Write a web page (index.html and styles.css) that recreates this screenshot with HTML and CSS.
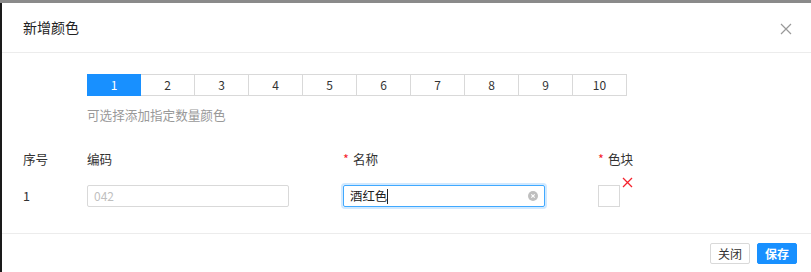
FILE: index.html
```html
<!DOCTYPE html>
<html>
  <head>
    <meta http-equiv="Content-Type" content="text/html; charset=utf-8">
    <link rel="stylesheet" href="styles.css">
  </head>
  <body>
    <div class="shade"></div>
    <div class="modal">
      <div class="head">
        <span class="title">新增颜色</span>
        <span class="close">
          <svg width="12" height="12" viewBox="0 0 12 12"><path d="M1 1L11 11M11 1L1 11" stroke="#999" stroke-width="1.2" fill="none"/></svg>
        </span>
      </div>
      <div class="body">
        <div class="pager">
          <span class="num on">1</span><span class="num">2</span><span class="num">3</span><span class="num">4</span><span class="num">5</span><span class="num">6</span><span class="num">7</span><span class="num">8</span><span class="num">9</span><span class="num">10</span>
        </div>
        <div class="hint">可选择添加指定数量颜色</div>
        <div class="grid">
          <div class="th">序号</div>
          <div class="th">编码</div>
          <div class="th"><i class="req">*</i>名称</div>
          <div class="th"><i class="req">*</i>色块</div>
          <div class="td">1</div>
          <div class="td"><div class="ipt"><span class="ph">042</span></div></div>
          <div class="td"><div class="ipt focus"><span class="val">酒红色</span><span class="caret"></span><span class="clear">
            <svg width="10" height="10" viewBox="0 0 10 10"><circle cx="5" cy="5" r="5" fill="#bfbfbf"/><path d="M3.3 3.3L6.7 6.7M6.7 3.3L3.3 6.7" stroke="#fff" stroke-width="1.1"/></svg>
          </span></div></div>
          <div class="td"><div class="swatch"><span class="del">
            <svg width="11" height="11" viewBox="0 0 11 11"><path d="M1 1L10 10M10 1L1 10" stroke="#f5222d" stroke-width="1.3" fill="none"/></svg>
          </span></div></div>
        </div>
      </div>
      <div class="foot">
        <button class="btn">关闭</button>
        <button class="btn primary">保存</button>
      </div>
    </div>
  </body>
</html>
```

FILE: styles.css
```css
html, body { margin: 0; padding: 0; width: 811px; height: 272px; overflow: hidden; }
body { background: #1a1a1a; font-family: "Noto Sans CJK SC", "Microsoft YaHei", sans-serif; font-size: 12px; color: #333; }
.shade { height: 3px; background: #8a8a8a; }
.modal { margin-left: 2px; background: #fff; height: 269px; }
.head { height: 49px; border-bottom: 1px solid #ececec; display: flex; align-items: center; justify-content: space-between; padding: 0 19px 0 21px; }
.title { font-size: 14px; color: #222; margin-top: -1px; }
.close { display: flex; margin-top: 2px; }
.body { padding: 21px 0 0 85px; height: 159px; border-bottom: 1px solid #ececec; }
.pager { display: flex; }
.num { width: 53px; height: 20px; line-height: 20px; text-align: center; border: 1px solid #d9d9d9; border-left: none; color: #333; }
.num:first-child { width: 52px; border-left: 1px solid #d9d9d9; }
.num.on { background: #1890ff; border-color: #1890ff; color: #fff; }
.hint { color: #999; font-size: 12.6px; margin-top: 10px; line-height: 18px; }
.grid { display: grid; grid-template-columns: 64px 256px 255px 60px; margin-left: -64px; margin-top: 26px; }
.th { line-height: 18px; font-size: 12.6px; color: #333; }
.req { font-style: normal; color: #f5222d; margin-right: 4px; }
.td { margin-top: 17px; height: 22px; line-height: 22px; font-size: 12.6px; }
.ipt { position: relative; height: 20px; border: 1px solid #d9d9d9; border-radius: 2px; display: flex; align-items: center; padding-left: 6px; box-sizing: content-box; width: 194px; }
.ipt.focus { border-color: #40a9ff; box-shadow: 0 0 0 2px rgba(24,144,255,0.2); }
.ph { color: #bfbfbf; font-size: 12px; }
.val { color: #222; font-size: 12.4px; }
.caret { width: 1px; height: 15px; background: #222; }
.clear { position: absolute; right: 6px; top: 5px; display: flex; }
.swatch { position: relative; width: 20px; height: 20px; border: 1px solid #d9d9d9; }
.del { position: absolute; left: 23px; top: -9px; display: flex; }
.foot { display: flex; justify-content: flex-end; gap: 7px; padding: 9px 14px 0 0; }
.btn { font-family: inherit; font-size: 12px; height: 21px; width: 40px; padding: 0; border: 1px solid #d9d9d9; background: #fff; color: #333; border-radius: 2px; line-height: 19px; }
.btn.primary { background: #1890ff; border-color: #1890ff; color: #fff; font-weight: bold; }
```
